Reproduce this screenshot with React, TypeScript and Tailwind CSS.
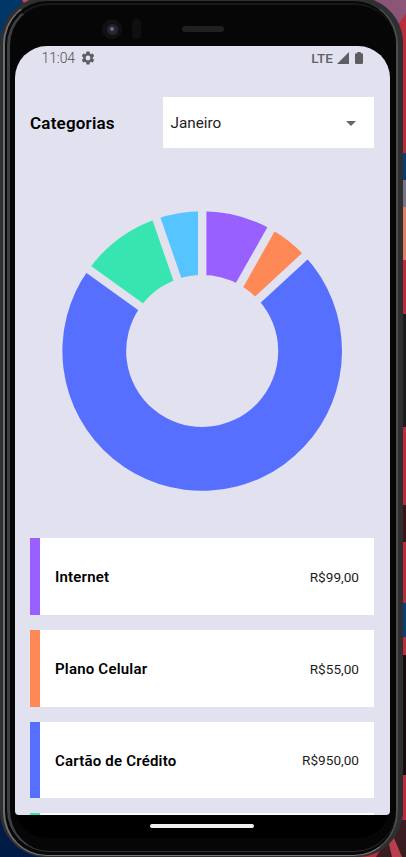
const slices = [
  { from: 0, to: 29.5, color: '#9861ff' },
  { from: 29.5, to: 47.3, color: '#ff8857' },
  { from: 47.3, to: 305.7, color: '#576fff' },
  { from: 305.7, to: 340.9, color: '#36e5b0' },
  { from: 340.9, to: 360, color: '#55c4ff' },
];

const categories = [
  { name: 'Internet', value: 'R$99,00', bar: 'bg-[#9861ff]' },
  { name: 'Plano Celular', value: 'R$55,00', bar: 'bg-[#ff8857]' },
  { name: 'Cartão de Crédito', value: 'R$950,00', bar: 'bg-[#576fff]' },
];

function point(angle: number, r: number) {
  const a = (angle * Math.PI) / 180;
  return `${(r * Math.sin(a)).toFixed(2)} ${(-r * Math.cos(a)).toFixed(2)}`;
}

function slicePath(from: number, to: number) {
  const large = to - from > 180 ? 1 : 0;
  return `M${point(from, 139.8)}A139.8 139.8 0 ${large} 1 ${point(to, 139.8)}L${point(to, 76)}A76 76 0 ${large} 0 ${point(from, 76)}Z`;
}

function Donut() {
  return (
    <svg className="mx-auto block shrink-0" width="284" height="284" viewBox="-142.2 -142 284 284">
      {slices.map((s) => (
        <path key={s.color} d={slicePath(s.from, s.to)} fill={s.color} />
      ))}
      {slices.map((s) => (
        <path key={s.from} d={`M${point(s.from, 70)}L${point(s.from, 145)}`} stroke="#e2e1ef" strokeWidth="8.4" />
      ))}
    </svg>
  );
}

function Wallpaper() {
  return (
    <svg className="col-start-1 row-start-1" width="406" height="857">
      <rect width="203" height="857" fill="#001c46" />
      <rect width="40" height="155" fill="#003668" />
      <path d="M22 0h20v8H27z" fill="#c94450" />
      <rect x="340" width="66" height="857" fill="#b92e3c" />
      <path d="M340 0h66v13L394 30 370 8z" fill="#8c5578" />
      <rect x="400" y="153" width="6" height="27" fill="#063e72" />
      <rect x="400" y="180" width="6" height="27" fill="#777285" />
      <rect x="400" y="207" width="6" height="53" fill="#e37c64" />
      <rect x="400" y="314" width="6" height="113" fill="#1b1b1b" />
      <rect x="400" y="505" width="6" height="37" fill="#3a1515" />
      <rect x="400" y="603" width="6" height="34" fill="#064078" />
      <rect x="400" y="655" width="6" height="120" fill="#170c0e" />
      <path d="M398 820h8v37h-30z" fill="#391d20" />
      <path d="M388 840l6-2 8 19h-10z" fill="#b8404d" />
    </svg>
  );
}

function StatusBar() {
  return (
    <div className="flex h-6 shrink-0 items-center pr-[27px] pl-[26.5px] text-[14px] text-[#626168]">
      <span className="w-[34px] font-light tracking-[-0.1px] text-[#505056]">11:04</span>
      <svg className="ml-1" width="16" height="16" viewBox="0 0 24 24" fill="#5e5d63">
        <path d="M19.14 12.94c.04-.3.06-.61.06-.94 0-.32-.02-.64-.07-.94l2.03-1.58a.49.49 0 0 0 .12-.61l-1.92-3.32a.49.49 0 0 0-.59-.22l-2.39.96c-.5-.38-1.03-.7-1.62-.94l-.36-2.54a.48.48 0 0 0-.48-.41h-3.84c-.24 0-.43.17-.47.41l-.36 2.54c-.59.24-1.13.57-1.62.94l-2.39-.96a.48.48 0 0 0-.59.22L2.74 8.87c-.12.21-.08.47.12.61l2.03 1.58c-.05.3-.09.63-.09.94s.02.64.07.94l-2.03 1.58a.49.49 0 0 0-.12.61l1.92 3.32c.12.22.37.29.59.22l2.39-.96c.5.38 1.03.7 1.62.94l.36 2.54c.05.24.24.41.48.41h3.84c.24 0 .44-.17.47-.41l.36-2.54c.59-.24 1.13-.56 1.62-.94l2.39.96c.22.08.47 0 .59-.22l1.92-3.32a.49.49 0 0 0-.12-.61zM12 15.6a3.6 3.6 0 1 1 0-7.2 3.6 3.6 0 0 1 0 7.2z" />
      </svg>
      <span className="ml-auto text-[13.6px] font-medium">LTE</span>
      <svg className="ml-[4px]" width="13" height="12" viewBox="0 0 13 12" fill="#5e5d63">
        <path d="M12 0v12H0z" />
      </svg>
      <svg className="ml-[5px]" width="8" height="12" viewBox="0 0 8 13" preserveAspectRatio="none" fill="#5e5d63">
        <path d="M2.3 0h3.4v1.3h1.1q1.2 0 1.2 1.2v9.2q0 1.3-1.2 1.3H1.2Q0 13 0 11.7V2.5q0-1.2 1.2-1.2h1.1z" />
      </svg>
    </div>
  );
}

function Screen() {
  return (
    <main className="flex h-[769px] flex-col overflow-hidden rounded-t-[32px] rounded-b-[4px] bg-[#e2e1ef]">
      <StatusBar />
      <header className="mr-[16px] ml-[15px] mt-[27.4px] flex h-[51px] shrink-0 items-center justify-between">
        <h1 className="mt-[2px] text-[17px] font-semibold tracking-[0.2px] text-black">Categorias</h1>
        <button className="flex h-[51px] w-[211.5px] items-center justify-between bg-white pt-[2px] pr-[18px] pl-[8px] text-[15.3px] text-[#1d1d1d]">
          Janeiro
          <svg width="10" height="5" viewBox="0 0 10 5" fill="#666">
            <path d="M0 0h10L5 5z" />
          </svg>
        </button>
      </header>
      <div className="mt-[60.4px] flex shrink-0 pr-px">
        <Donut />
      </div>
      <div className="mr-[16px] ml-[15px] mt-[45.4px] flex flex-col gap-[15px]">
        {categories.map((c) => (
          <div key={c.name} className="flex h-[76.7px] shrink-0 items-center bg-white pr-[15px]">
            <div className={`h-full w-[10px] ${c.bar}`} />
            <span className="ml-[15px] pt-[2px] text-[15px] font-semibold tracking-[0.2px] text-black">{c.name}</span>
            <span className="ml-auto pt-px text-[13.6px] text-[#1d1d1d]">{c.value}</span>
          </div>
        ))}
        <div className="flex h-[2px] shrink-0 bg-white">
          <div className="w-[10px] bg-[#36e5b0]" />
        </div>
      </div>
    </main>
  );
}

export default function App() {
  return (
    <div className="grid h-[857px] w-[406px] overflow-hidden font-['Roboto',sans-serif]">
      <Wallpaper />
      <div className="col-start-1 row-start-1 -mt-[3px] h-[860px] w-[403px] rounded-[46px] bg-[#2e2f30] pt-[3px] pr-[5px] pb-px pl-[3px]">
        <div className="h-full rounded-[44px] border-t border-r-2 border-b border-l-2 border-t-[#303330] border-r-[#4c4c4c] border-b-[#777] border-l-[#6c6e6f] bg-[#080709] pt-[2px] pb-[3px] pl-[2px]">
          <div className="h-full rounded-[42px] border-t-2 border-b border-l-[3px] border-t-[#171918] border-b-[#333] border-l-[#3d4041] bg-[#060607] pr-[6px] pl-[5px]">
            <div className="flex h-[41px] items-center pt-[7px] pr-[4px]">
              <div className="ml-[87px] flex size-[20px] items-center justify-center rounded-full bg-[#111113]">
                <div className="flex size-[11px] items-center justify-center rounded-full bg-[#25272b]">
                  <div className="size-[4px] rounded-full bg-[#60718e]" />
                </div>
              </div>
              <div className="ml-[10px] h-[20px] w-[9px] rounded-[4px] bg-[#0f0f11]" />
              <div className="ml-[41px] h-[6px] w-[42px] rounded-full bg-[#202020]" />
            </div>
            <div className="rounded-t-[32px] rounded-b-[32px] bg-black">
              <Screen />
              <div className="flex h-[23px] justify-center pt-[9px] pr-px">
                <div className="h-[4px] w-[104px] rounded-full bg-[#eff1ec]" />
              </div>
            </div>
          </div>
        </div>
      </div>
    </div>
  );
}
